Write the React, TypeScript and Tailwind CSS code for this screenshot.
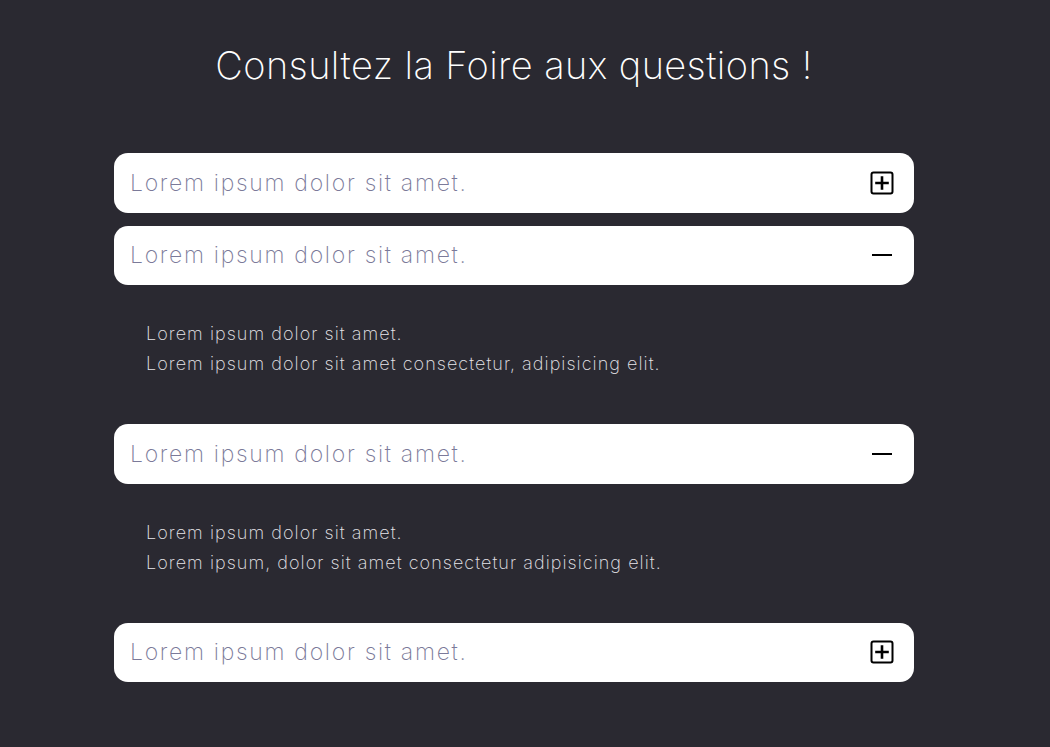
import React, { useState } from 'react';

type Faq = { q: string; a: string[] };

const faqs: Faq[] = [
    { q: 'Lorem ipsum dolor sit amet.', a: ['Lorem ipsum dolor sit amet.', 'Lorem ipsum dolor sit amet consectetur, adipisicing elit.'] },
    { q: 'Lorem ipsum dolor sit amet.', a: ['Lorem ipsum dolor sit amet.', 'Lorem ipsum dolor sit amet consectetur, adipisicing elit.'] },
    { q: 'Lorem ipsum dolor sit amet.', a: ['Lorem ipsum dolor sit amet.', 'Lorem ipsum, dolor sit amet consectetur adipisicing elit.'] },
    { q: 'Lorem ipsum dolor sit amet.', a: ['Lorem ipsum dolor sit amet.', 'Lorem ipsum dolor sit amet consectetur, adipisicing elit.'] },
];

const PlusIcon = () => (
    <svg width="24" height="24" viewBox="0 0 24 24" fill="none" stroke="#000" strokeWidth="2" strokeLinecap="square">
        <rect x="1.5" y="1.5" width="21" height="21" rx="2" />
        <path d="M12 6.5v11M6.5 12h11" strokeWidth="2.6" />
    </svg>
);

const MinusIcon = () => (
    <svg width="24" height="24" viewBox="0 0 24 24" fill="none" stroke="#000" strokeWidth="2">
        <path d="M2 12h20" />
    </svg>
);

const App: React.FC = () => {
    const [open, setOpen] = useState<boolean[]>([false, true, true, false]);

    const toggle = (i: number) => setOpen(open.map((o, j) => (j === i ? !o : o)));

    return (
        <div className="min-h-[747px] bg-[#2a2931] font-['Inter',sans-serif] font-extralight">
            <div className="w-[1028px] flex flex-col items-center pt-[40px] pb-10">
                <h1 className="text-[38px] leading-[50px] text-white tracking-[0.4px]">Consultez la Foire aux questions !</h1>

                <div className="w-[800px] mt-[63px] flex flex-col">
                    {faqs.map((f, i) => (
                        <div key={i} className={i === 0 ? '' : open[i - 1] ? '' : 'mt-[13px]'}>
                            <button
                                onClick={() => toggle(i)}
                                className="w-full h-[59.5px] bg-white rounded-[14px] flex items-center justify-between pl-4 pr-[20px] text-left cursor-pointer"
                            >
                                <span className="text-[23px] tracking-[1.7px] text-[#7b7a99] font-extralight">{f.q}</span>
                                {open[i] ? <MinusIcon /> : <PlusIcon />}
                            </button>
                            {open[i] && (
                                <div className="pl-8 pt-[34px] pb-[45px] text-[18px] leading-[30px] tracking-[1.05px] text-[#e6e5ea] font-extralight">
                                    {f.a.map((line, k) => (
                                        <p key={k}>{line}</p>
                                    ))}
                                </div>
                            )}
                        </div>
                    ))}
                </div>
            </div>
        </div>
    );
};

export default App;
